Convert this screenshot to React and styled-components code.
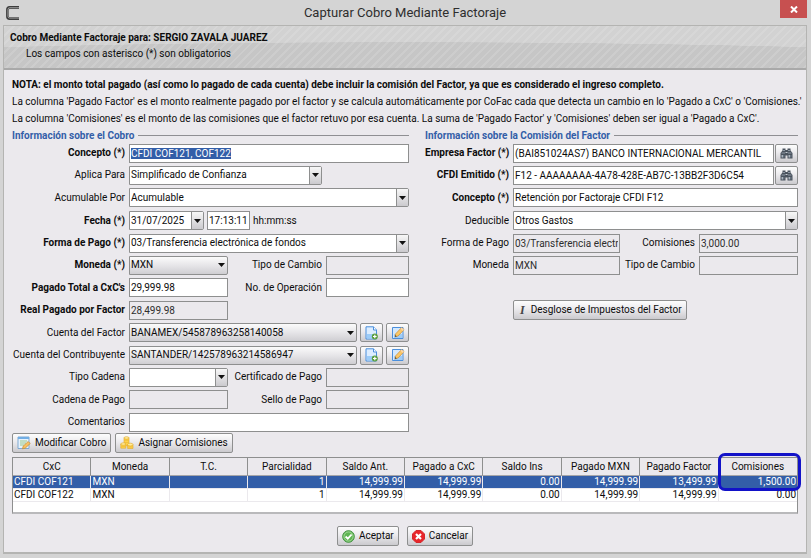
import React from 'react';
import styled, { createGlobalStyle } from 'styled-components';

const Global = createGlobalStyle`
  * { box-sizing: border-box; }
  body { margin: 0; background: #d4d4d4; }
  body, input, select, button, table {
    font-family: Roboto, "Noto Sans", sans-serif;
    font-size: 10px;
    line-height: 14px;
    color: #0c0c0c;
  }
`;

const Window = styled.div`
  display: flex;
  flex-direction: column;
  min-height: 100vh;
  padding: 0 4px 4px 3px;
  background: #d4d4d4;
`;
const TitleBar = styled.header`
  display: grid;
  grid-template-columns: 27px 1fr 27px;
  height: 25px;
`;
const AppIcon = styled.svg`
  width: 14px;
  height: 14px;
  margin: 6px 0 0 3px;
`;
const Title = styled.h1`
  margin: 0;
  font-size: 13px;
  font-weight: 400;
  line-height: 25px;
  text-align: center;
  color: #2e2e2e;
`;
const CloseButton = styled.button`
  display: grid;
  place-items: center;
  height: 18px;
  padding: 0;
  border: 0;
  background: #c75050;
`;
const Client = styled.main`
  flex: 1;
  display: flex;
  flex-direction: column;
  border: 1px solid #b4b4b2;
  border-bottom-width: 2px;
  background: #ebe9ed;
`;
const Banner = styled.section`
  height: 44px;
  padding: 5px 6px;
  border-bottom: 2px solid #a9a9a9;
  background:
    repeating-linear-gradient(135deg, rgba(255,255,255,0.12) 0 2px, transparent 2px 6px),
    radial-gradient(ellipse 110% 45px at 50% 61px, #c6c6c6 99%, transparent 100%),
    #d2d2d2;
`;
const BannerTitle = styled.h2`
  margin: 0 0 2px;
  font-size: 10px;
  font-weight: 700;
  line-height: 14px;
`;
const BannerHint = styled.p`
  margin: 0 0 0 16px;
`;
const Body = styled.div`
  padding: 8px 8px 0;
`;
const Note = styled.p`
  margin: 0 0 3px;
  font-weight: ${p => (p.$strong ? 700 : 400)};
  white-space: nowrap;
`;
const Columns = styled.div`
  display: grid;
  grid-template-columns: 397fr 373fr;
  gap: 16px;
  align-items: start;
`;
const Group = styled.fieldset`
  min-width: 0;
  margin: 0;
  padding: 0;
  border: 0;
  display: flex;
  flex-direction: column;
`;
const GroupTitle = styled.legend`
  display: flex;
  align-items: center;
  gap: 4px;
  width: 100%;
  padding: 0;
  line-height: 13px;
  font-weight: 700;
  color: #335ea8;
  &::after { content: ""; flex: 1; height: 1px; background: #8f8f93; }
`;
const Row = styled.div`
  display: grid;
  grid-template-columns: ${p => p.$label || 113}px 1fr;
  column-gap: 4px;
  align-items: center;
  height: ${p => (p.$tall ? 23 : 22)}px;
`;
const Label = styled.label`
  text-align: right;
  white-space: nowrap;
  font-weight: ${p => (p.$strong ? 700 : 400)};
`;
const Cells = styled.div`
  display: grid;
  grid-template-columns: ${p => p.$cols};
  column-gap: ${p => p.$gap || 4}px;
  align-items: center;
`;
const Input = styled.input`
  width: 100%;
  min-width: 0;
  height: 19px;
  padding: 0 1px;
  border: 1px solid #8e8f8f;
  border-radius: 0;
  outline: 0;
  background: ${p => (p.readOnly ? '#ebe9ed' : '#fff')};
  color: ${p => (p.readOnly ? '#2e2e2e' : '#0c0c0c')};
  &::selection { background: #335ea8; color: #fff; }
`;
const Picker = styled.div`
  display: grid;
  grid-template-columns: 1fr 12px;
  width: 100%;
  height: 19px;
  border: 1px solid #8e8f8f;
  border-radius: 0 2px 2px 0;
  background: ${p => (p.$button ? 'linear-gradient(#fbfbfb, #e6e5e8 50%, #cfced2)' : '#fff')};
  > * { grid-row: 1; min-width: 0; }
  select, input {
    grid-column: 1 / 3;
    appearance: none;
    width: 100%;
    height: 17px;
    padding: 0 14px 0 1px;
    border: 0;
    outline: 0;
    background: transparent;
  }
`;
const Arrow = styled.span`
  grid-column: 2;
  display: grid;
  place-items: center;
  pointer-events: none;
  border-left: ${p => (p.$button ? 0 : '1px solid #8e8f8f')};
  background: ${p => (p.$button ? 'transparent' : 'linear-gradient(#f7f7f7, #cbcace)')};
`;
const Button = styled.button`
  display: inline-flex;
  align-items: center;
  justify-content: center;
  gap: 4px;
  height: ${p => (p.$icon ? 19 : 20)}px;
  padding: 0 ${p => (p.$icon ? 0 : 4)}px;
  border: 1px solid #8e8f8f;
  border-radius: 2px;
  white-space: nowrap;
  background: linear-gradient(#fdfdfd, #ebeaed 45%, #cbcace);
  svg { flex: none; }
`;
const Emphasis = styled.span`
  font: italic 700 12px "Liberation Serif", serif;
  color: #444;
  padding: 0 2px;
`;
const Actions = styled.div`
  display: flex;
  justify-content: ${p => (p.$center ? 'center' : 'flex-start')};
  gap: ${p => (p.$center ? 8 : 4)}px;
  padding-top: ${p => (p.$top || 0)}px;
`;
const TableFrame = styled.div`
  height: 57px;
  margin-top: 4px;
  border: 1px solid #8e8f8f;
  border-bottom: 2px solid #b9b9bb;
  background: #fff;
`;
const Table = styled.table`
  width: 100%;
  table-layout: fixed;
  border-collapse: separate;
  border-spacing: 0;
  th {
    height: 18px;
    padding: 0;
    font-weight: 400;
    font-size: 10px;
    background: #ebe9ed;
    border-right: 1px solid #8e8f8f;
    border-bottom: 1px solid #a5a5a8;
  }
  td {
    height: 13px;
    line-height: 12px;
    padding: 0 1px;
    border-right: 1px solid #ebe9ed;
    border-bottom: 1px solid #ebe9ed;
    text-align: right;
  }
  td:nth-child(-n + 2) { text-align: left; }
  th:last-child, td:last-child { border-right: 0; }
`;
const DataRow = styled.tr`
  color: ${p => (p.$selected ? '#fff' : 'inherit')};
  background: ${p => (p.$selected ? '#335ea8' : '#fff')};
`;
const Highlighted = styled.div`
  position: relative;
`;
const Highlight = styled.div`
  position: absolute;
  top: -4px;
  right: -3px;
  width: calc(10% + 4px);
  height: 38px;
  border: 3px solid #1212c8;
  border-radius: 7px;
  pointer-events: none;
`;

const Triangle = () => (
  <svg width="7" height="4" viewBox="0 0 7 4" aria-hidden="true"><path d="M0 0h7L3.5 4z" fill="#111" /></svg>
);
const Binoculars = () => (
  <svg width="13" height="11" viewBox="0 0 13 11" aria-hidden="true">
    <path d="M2.500.5h3v1.500h2V.5h3v2L12.500 5v5.500h-5v-3h-2v3h-5V5l2-2.500z" fill="#4a535e" />
    <path d="M3 2.500h2M8 2.500h2M1.500 5h3.500M8 5h3.500" stroke="#8e99a5" />
    <path d="M1.500 7h1.500v2.500h-1.500zM8.500 7H10v2.500H8.500z" fill="#aab4be" />
    <path d="M3.800 7v2.500M10.900 7v2.500" stroke="#76828f" />
    <path d="M5.500 4.500h2" stroke="#c3cad1" />
  </svg>
);
const PageAdd = () => (
  <svg width="13" height="14" viewBox="0 0 13 14" aria-hidden="true">
    <path d="M1 .8h7.500L11.500 4v9H1z" fill="#dcedff" stroke="#4b8fdc" />
    <path d="M2 8h9v4.500H2z" fill="#9cccf8" />
    <path d="M8.500.8V4h3" fill="#fff" stroke="#4b8fdc" />
    <circle cx="9.800" cy="10.500" r="3" fill="#5a9e3e" />
    <path d="M9.800 8.700v3.600M8 10.500h3.600" stroke="#fff" strokeWidth="1.200" />
  </svg>
);
const PageEdit = () => (
  <svg width="14" height="14" viewBox="0 0 14 14" aria-hidden="true">
    <path d="M1.500 1.500h10.500v11H1.500z" fill="#d3e8fd" stroke="#4b8fdc" />
    <path d="M3 8h8v4H3z" fill="#9fccf6" />
    <path d="M4 10.800l.7-3L10.600 1.500l2.400 2.200-6 6.300z" fill="#fbc766" stroke="#c98c35" strokeWidth=".7" />
    <path d="M9.500 2.700l2.300 2.200 1.200-1.200-2.400-2.200z" fill="#f8d7b0" />
    <path d="M4 10.800l.4-1.700 1.300 1.300z" fill="#333" />
  </svg>
);
const NoteEdit = () => (
  <svg width="14" height="14" viewBox="0 0 14 14" aria-hidden="true">
    <path d="M1 1h11v11.500H1z" fill="#e6f2fd" stroke="#7fa9d2" />
    <path d="M1 1h11v2H1z" fill="#72aee5" />
    <path d="M3 5h7M3 7h6M3 9h4" stroke="#9cc98b" />
    <path d="M5.500 12.800l.7-2.700 5-4.600 2 2-5 4.700z" fill="#f8c163" stroke="#c58a2c" strokeWidth=".7" />
  </svg>
);
const Coins = () => (
  <svg width="14" height="14" viewBox="0 0 14 14" aria-hidden="true">
    <g fill="#ffd24a" stroke="#e0a828" strokeWidth=".6">
      <path d="M4 1.800v8h5v-8z" /><ellipse cx="6.500" cy="1.900" rx="2.500" ry="1.200" fill="#ffec9a" />
      <path d="M.8 8v4.200h5V8z" /><ellipse cx="3.300" cy="8" rx="2.500" ry="1.200" fill="#ffec9a" />
      <path d="M7.600 8.500v4h5.400v-4z" /><ellipse cx="10.300" cy="8.600" rx="2.700" ry="1.400" fill="#ffec9a" />
    </g>
    <path d="M4.500 4.300h4M4.500 6.500h4M1.300 10.400h4M8.200 11h4.300" stroke="#eab535" strokeWidth=".6" />
  </svg>
);
const Accept = () => (
  <svg width="13" height="13" viewBox="0 0 13 13" aria-hidden="true">
    <circle cx="6.500" cy="6.500" r="5.800" fill="#5fb653" stroke="#3d8f3b" />
    <circle cx="6.500" cy="6.500" r="4.600" fill="none" stroke="#b4e0a8" strokeWidth=".8" />
    <path d="M3.600 6.500l2.200 2.200 3.800-4.200" fill="none" stroke="#fff" strokeWidth="1.800" />
  </svg>
);
const Cancel = () => (
  <svg width="13" height="13" viewBox="0 0 13 13" aria-hidden="true">
    <path d="M4 .5h5L12.500 4v5L9 12.500H4L.5 9V4z" fill="#e8252a" stroke="#d3282c" />
    <path d="M4 4l5 5M9 4L4 9" stroke="#fff" strokeWidth="2.200" />
  </svg>
);

function Combo({ id, value, button }) {
  return (
    <Picker $button={button}>
      <select id={id} defaultValue={value}><option value={value}>{value}</option></select>
      <Arrow $button={button}><Triangle /></Arrow>
    </Picker>
  );
}
function Account({ id, label, value, tall }) {
  return (
    <Row $tall={tall}>
      <Label htmlFor={id}>{label}</Label>
      <Cells $cols="1fr 23px 23px" $gap={3}>
        <Combo id={id} value={value} button />
        <Button $icon aria-label={'Agregar ' + label}><PageAdd /></Button>
        <Button $icon aria-label={'Editar ' + label}><PageEdit /></Button>
      </Cells>
    </Row>
  );
}
const Field = ({ id, label, strong, tall, w, children }) => (
  <Row $tall={tall} $label={w}>
    <Label htmlFor={id} $strong={strong}>{label}</Label>
    {children}
  </Row>
);

const PAIR = '99px 1fr 83px';
const FACTOR_PAIR = '107px 1fr 99px';
const FACTOR_LABEL = 84;
const HEADERS = ['CxC', 'Moneda', 'T.C.', 'Parcialidad', 'Saldo Ant.', 'Pagado a CxC', 'Saldo Ins', 'Pagado MXN', 'Pagado Factor', 'Comisiones'];
const ROWS = [
  ['CFDI COF121', 'MXN', '', '1', '14,999.99', '14,999.99', '0.00', '14,999.99', '13,499.99', '1,500.00'],
  ['CFDI COF122', 'MXN', '', '1', '14,999.99', '14,999.99', '0.00', '14,999.99', '14,999.99', '0.00'],
];

const selectText = node => {
  if (node) {
    node.focus();
    node.select();
  }
};

export default function App() {
  return (
    <Window>
      <Global />
      <TitleBar>
        <AppIcon viewBox="0 0 14 14" aria-hidden="true">
          <path d="M13 1.500H3.500Q1.500 1.500 1.500 3.500v7q0 2 2 2H13" fill="none" stroke="#3d3d3d" strokeWidth="2.800" />
          <path d="M13 1.800H3.700Q2 1.800 2 3.500v7q0 1.500 1.700 1.500H13" fill="none" stroke="#a8a8a8" strokeWidth="1" />
        </AppIcon>
        <Title>Capturar Cobro Mediante Factoraje</Title>
        <CloseButton aria-label="Cerrar">
          <svg width="8" height="7" viewBox="0 0 8 7"><path d="M1 .5l6 6M7 .5l-6 6" stroke="#fff" strokeWidth="2" /></svg>
        </CloseButton>
      </TitleBar>
      <Client>
        <Banner>
          <BannerTitle>Cobro Mediante Factoraje para: SERGIO ZAVALA JUAREZ</BannerTitle>
          <BannerHint>Los campos con asterisco (*) son obligatorios</BannerHint>
        </Banner>
        <Body>
          <Note $strong>NOTA: el monto total pagado (así como lo pagado de cada cuenta) debe incluir la comisión del Factor, ya que es considerado el ingreso completo.</Note>
          <Note>La columna 'Pagado Factor' es el monto realmente pagado por el factor y se calcula automáticamente por CoFac cada que detecta un cambio en lo 'Pagado a CxC' o 'Comisiones.'</Note>
          <Note>La columna 'Comisiones' es el monto de las comisiones que el factor retuvo por esa cuenta. La suma de 'Pagado Factor' y 'Comisiones' deben ser igual a 'Pagado a CxC'.</Note>
          <Columns>
            <Group>
              <GroupTitle>Información sobre el Cobro</GroupTitle>
              <Field id="concepto" label="Concepto (*)" strong>
                <Input id="concepto" defaultValue="CFDI COF121, COF122" ref={selectText} />
              </Field>
              <Field id="aplica" label="Aplica Para">
                <Cells $cols="193px"><Combo id="aplica" value="Simplificado de Confianza" /></Cells>
              </Field>
              <Field id="acumulable" label="Acumulable Por" tall>
                <Combo id="acumulable" value="Acumulable" />
              </Field>
              <Field id="fecha" label="Fecha (*)" strong tall>
                <Cells $cols="75px 43px 1fr" $gap={3}>
                  <Picker>
                    <input id="fecha" defaultValue="31/07/2025" />
                    <Arrow><Triangle /></Arrow>
                  </Picker>
                  <Input aria-label="Hora" defaultValue="17:13:11" />
                  <span>hh:mm:ss</span>
                </Cells>
              </Field>
              <Field id="forma" label="Forma de Pago (*)" strong>
                <Combo id="forma" value="03/Transferencia electrónica de fondos" />
              </Field>
              <Field id="moneda" label="Moneda (*)" strong>
                <Cells $cols={PAIR}>
                  <Combo id="moneda" value="MXN" button />
                  <Label htmlFor="cambio">Tipo de Cambio</Label>
                  <Input id="cambio" readOnly />
                </Cells>
              </Field>
              <Field id="total" label="Pagado Total a CxC's" strong tall>
                <Cells $cols={PAIR}>
                  <Input id="total" defaultValue="29,999.98" />
                  <Label htmlFor="operacion">No. de Operación</Label>
                  <Input id="operacion" />
                </Cells>
              </Field>
              <Field id="real" label="Real Pagado por Factor" strong>
                <Cells $cols={PAIR}><Input id="real" readOnly value="28,499.98" /></Cells>
              </Field>
              <Account id="cuentaFactor" label="Cuenta del Factor" value="BANAMEX/545878963258140058" tall />
              <Account id="cuentaContrib" label="Cuenta del Contribuyente" value="SANTANDER/142578963214586947" />
              <Field id="cadenaTipo" label="Tipo Cadena">
                <Cells $cols={PAIR}>
                  <Combo id="cadenaTipo" value="" />
                  <Label htmlFor="certificado">Certificado de Pago</Label>
                  <Input id="certificado" readOnly />
                </Cells>
              </Field>
              <Field id="cadena" label="Cadena de Pago" tall>
                <Cells $cols={PAIR}>
                  <Input id="cadena" readOnly />
                  <Label htmlFor="sello">Sello de Pago</Label>
                  <Input id="sello" readOnly />
                </Cells>
              </Field>
              <Field id="comentarios" label="Comentarios">
                <Input id="comentarios" />
              </Field>
            </Group>
            <Group>
              <GroupTitle>Información sobre la Comisión del Factor</GroupTitle>
              <Field id="empresa" label="Empresa Factor (*)" strong w={FACTOR_LABEL}>
                <Cells $cols="1fr 23px" $gap={1}>
                  <Input id="empresa" defaultValue="(BAI851024AS7) BANCO INTERNACIONAL MERCANTIL" />
                  <Button $icon aria-label="Buscar empresa"><Binoculars /></Button>
                </Cells>
              </Field>
              <Field id="cfdi" label="CFDI Emitido (*)" strong w={FACTOR_LABEL}>
                <Cells $cols="1fr 23px" $gap={1}>
                  <Input id="cfdi" defaultValue="F12 - AAAAAAAA-4A78-428E-AB7C-13BB2F3D6C54" />
                  <Button $icon aria-label="Buscar CFDI"><Binoculars /></Button>
                </Cells>
              </Field>
              <Field id="conceptoFactor" label="Concepto (*)" strong tall w={FACTOR_LABEL}>
                <Input id="conceptoFactor" defaultValue="Retención por Factoraje CFDI F12" />
              </Field>
              <Field id="deducible" label="Deducible" tall w={FACTOR_LABEL}>
                <Combo id="deducible" value="Otros Gastos" />
              </Field>
              <Field id="formaFactor" label="Forma de Pago" w={FACTOR_LABEL}>
                <Cells $cols={FACTOR_PAIR}>
                  <Input id="formaFactor" readOnly value="03/Transferencia electrónica de fondos" />
                  <Label htmlFor="comisiones">Comisiones</Label>
                  <Input id="comisiones" readOnly value="3,000.00" />
                </Cells>
              </Field>
              <Field id="monedaFactor" label="Moneda" w={FACTOR_LABEL}>
                <Cells $cols={FACTOR_PAIR}>
                  <Input id="monedaFactor" readOnly value="MXN" />
                  <Label htmlFor="cambioFactor">Tipo de Cambio</Label>
                  <Input id="cambioFactor" readOnly />
                </Cells>
              </Field>
              <Row $label={FACTOR_LABEL} $tall />
              <Row $label={FACTOR_LABEL}>
                <span />
                <Actions><Button><Emphasis>I</Emphasis>Desglose de Impuestos del Factor</Button></Actions>
              </Row>
            </Group>
          </Columns>
          <Actions>
            <Button><NoteEdit />Modificar Cobro</Button>
            <Button><Coins />Asignar Comisiones</Button>
          </Actions>
          <Highlighted>
            <TableFrame>
              <Table>
                <thead><tr>{HEADERS.map(h => <th key={h} scope="col">{h}</th>)}</tr></thead>
                <tbody>
                  {ROWS.map((cells, i) => (
                    <DataRow key={cells[0]} $selected={i === 0}>
                      {cells.map((c, j) => <td key={j}>{c}</td>)}
                    </DataRow>
                  ))}
                </tbody>
              </Table>
            </TableFrame>
            <Highlight />
          </Highlighted>
          <Actions $center $top={12}>
            <Button><Accept />Aceptar</Button>
            <Button><Cancel />Cancelar</Button>
          </Actions>
        </Body>
      </Client>
    </Window>
  );
}
